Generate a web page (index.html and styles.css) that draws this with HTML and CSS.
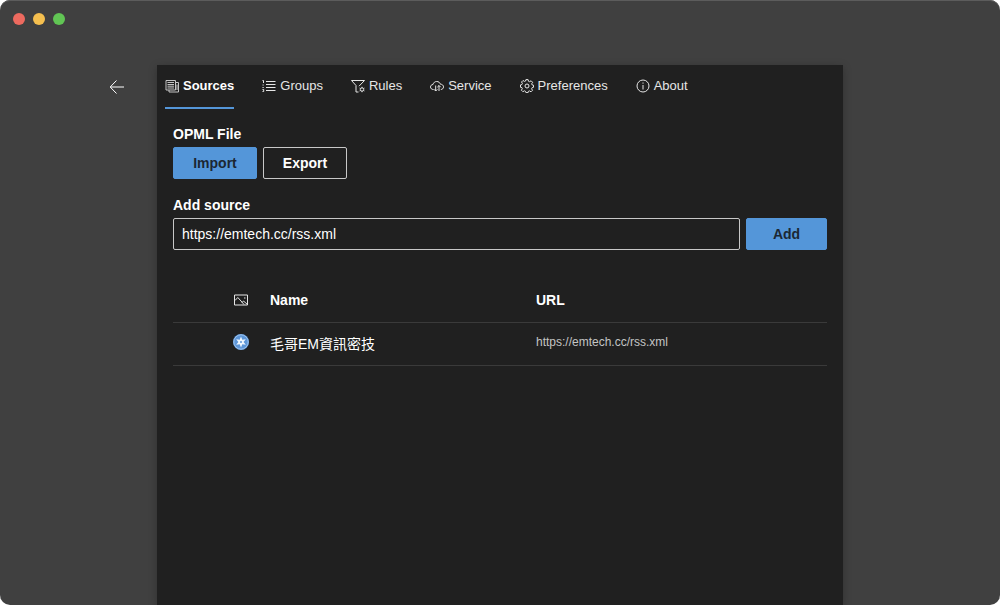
FILE: index.html
```
<!doctype html>
<html lang="en">
<head>
  <meta charset="UTF-8" />
  <meta name="viewport" content="width=device-width, initial-scale=1.0" />
  <title>Settings</title>
  <link rel="stylesheet" href="styles.css">
</head>
<body>
  <div class="window">
    <header class="titlebar">
      <span class="dot red"></span>
      <span class="dot yellow"></span>
      <span class="dot green"></span>
    </header>

    <div class="settings">
      <div class="side">
        <button class="back" type="button" aria-label="Back">
          <svg width="16" height="16" viewBox="0 0 16 16"><path d="M15 8H1.500M7.500 1.500 1.200 8l6.300 6.500" /></svg>
        </button>
      </div>

      <main class="panel">
        <nav class="tabs">
          <button class="tab active" type="button">
            <svg viewBox="0 0 14 14"><path d="M1 1.500h9.500v9.500H1zM10.500 3.500h3v9.500h-9.500v-2M2.500 3.500h6.500M2.500 5.500h6.500M2.500 7.200h6.500M2.500 9h6.500M12 5.500v5.500" /></svg>
            <span>Sources</span>
          </button>
          <button class="tab" type="button">
            <svg viewBox="0 0 14 14"><path d="M4 2.500h9.500M4 5.500h9.500M4 8.500h9.500M4 11.500h9.500M.5 1.500h1v2.500M.5 6h1.200M.5 8.500h1.200M.5 10.500h1.200v2H.5" /></svg>
            <span>Groups</span>
          </button>
          <button class="tab" type="button">
            <svg viewBox="0 0 14 14"><path d="M8 7.200 13.500 1.500H.5l4.500 5v6.500h2.500" /><circle cx="11" cy="10.500" r="1.700" /><path d="M11 7.800v1M11 12.200v1M8.600 9.100l.9.500M12.500 11.400l.9.500M8.600 11.900l.9-.5M12.500 9.600l.9-.5" /></svg>
            <span>Rules</span>
          </button>
          <button class="tab" type="button">
            <svg viewBox="0 0 14 14"><path d="M3.500 10.500C1.500 10.500.5 9.300.5 8s1-2.500 2.500-2.500C3.400 3.500 5 2.500 6.700 2.500c1.900 0 3.200 1.100 3.700 2.700 1.900 0 3.100 1.200 3.100 2.700s-1.100 2.600-2.700 2.600M5.700 6.500V12M4 10.300 5.700 12l1.700-1.700M9 12V6.500M7.300 8.200 9 6.500l1.700 1.700" /></svg>
            <span>Service</span>
          </button>
          <button class="tab" type="button">
            <svg viewBox="0 0 14 14"><path d="M5.900.600h2.200l.4 1.700 1.100.4 1.500-.9 1.500 1.500-.9 1.500.4 1.100 1.400.3v2.100l-1.400.4-.5 1.100.9 1.500-1.500 1.500-1.500-.9-1.100.4-.3 1.300H5.900l-.4-1.300-1.100-.5-1.500.9-1.500-1.500.9-1.500-.4-1.100-1.400-.3V5.900l1.400-.4.500-1.100-.9-1.400 1.500-1.500 1.500.9 1.100-.4z" /><circle cx="7" cy="7" r="2" /></svg>
            <span>Preferences</span>
          </button>
          <button class="tab" type="button">
            <svg viewBox="0 0 14 14"><circle cx="7" cy="7" r="6" /><path d="M7 6v4.500M7 3.500v1.200" /></svg>
            <span>About</span>
          </button>
        </nav>

        <div class="content">
          <section class="field">
            <h2 class="label">OPML File</h2>
            <div class="row">
              <button class="btn primary" type="button">Import</button>
              <button class="btn" type="button">Export</button>
            </div>
          </section>

          <form class="field">
            <label class="label" for="sourceUrl">Add source</label>
            <div class="row">
              <input class="input" id="sourceUrl" type="text" value="https://emtech.cc/rss.xml" />
              <button class="btn primary" type="button">Add</button>
            </div>
          </form>

          <table class="sources">
            <thead>
              <tr>
                <th class="col-icon" aria-label="Icon">
                  <svg class="pic" width="16" height="14" viewBox="0 0 16 14"><path d="M1.500 2h13v10h-13zM2 7.500l2.800-3L8 8M9 9.500l1.500-1.500 4 3.500M8 8l3 3.500M11 5h1.500" /></svg>
                </th>
                <th class="col-name">Name</th>
                <th class="col-url">URL</th>
              </tr>
            </thead>
            <tbody>
              <tr>
                <td class="col-icon">
                  <svg class="favicon" width="16" height="16" viewBox="0 0 16 16">
                    <circle cx="8" cy="8" r="8" fill="#5d96d8" />
                    <circle cx="8" cy="8" r="7.200" fill="none" stroke="#9cc3ee" />
                    <path d="M8 2.500 9.300 5.700 12.800 5.200 10.600 8l2.200 2.800-3.500-.5L8 13.500l-1.300-3.200-3.500.5L5.400 8 3.200 5.200l3.500.5z" fill="#eff7ff" />
                    <circle cx="8" cy="8" r="1" fill="#5d96d8" />
                  </svg>
                </td>
                <td class="col-name" lang="zh-TW">毛哥EM資訊密技</td>
                <td class="col-url">https://emtech.cc/rss.xml</td>
              </tr>
            </tbody>
          </table>
        </div>
      </main>
    </div>
  </div>
</body>
</html>
```
FILE: styles.css
```
:root {
  --bg: #404040;
  --panel: #202020;
  --text: #fff;
  --text-soft: #e6e6e6;
  --text-dim: #c4c4c4;
  --brand: #5496d9;
  --line: #3a3a3a;
}
* { box-sizing: border-box; }
body {
  margin: 0;
  background: #fff;
  color: var(--text);
  font-family: "Liberation Sans", "Noto Sans CJK TC", sans-serif;
  font-size: 14px;
  line-height: 20px;
}
button, input { font: inherit; color: inherit; }
svg { display: block; fill: none; stroke: currentColor; }
.window {
  min-height: 100vh;
  display: flex;
  flex-direction: column;
  background: var(--bg);
  border-radius: 10px;
  overflow: hidden;
  box-shadow: inset 0 1px 0 #5c5c5c;
}
.titlebar { display: flex; gap: 8px; padding: 13px; height: 65px; }
.dot { width: 12px; height: 12px; border-radius: 50%; }
.red { background: #ed6a5f; }
.yellow { background: #f5bf4f; }
.green { background: #61c554; }
.settings {
  flex: 1;
  display: grid;
  grid-template-columns: 1fr minmax(0, 686px) 1fr;
}
.side { display: flex; justify-content: flex-end; align-items: flex-start; padding: 6px 24px; }
.back {
  display: grid;
  place-items: center;
  width: 32px;
  height: 32px;
  padding: 0;
  border: 0;
  background: none;
  cursor: pointer;
}
.panel { background: var(--panel); box-shadow: 0 2px 8px rgba(0,0,0,.25); }
.tabs { display: flex; gap: 28px; height: 44px; padding: 0 8px; }
.tab {
  display: flex;
  align-items: center;
  gap: 4px;
  padding: 0;
  border: 0;
  border-bottom: 2px solid transparent;
  background: none;
  color: var(--text-soft);
  font-size: 13px;
  cursor: pointer;
}
.tab svg { width: 14px; height: 14px; }
.tab.active { color: var(--text); font-weight: 700; border-bottom-color: var(--brand); }
.tab.active svg { color: var(--text-dim); }
.content { padding: 15px 16px; }
.field { margin-bottom: 16px; }
.label { display: block; margin: 0 0 3px; font-size: 14px; font-weight: 700; }
.row { display: flex; gap: 6px; }
.btn {
  min-width: 84px;
  height: 32px;
  padding: 0 16px;
  border: 1px solid #c8c8c8;
  border-radius: 2px;
  background: none;
  font-weight: 700;
  cursor: pointer;
}
.btn.primary { background: var(--brand); border-color: var(--brand); color: #1b2733; }
.field .input + .btn { min-width: 81px; }
.input {
  flex: 1;
  min-width: 0;
  height: 32px;
  padding: 0 8px;
  border: 1px solid #c8c8c8;
  border-radius: 2px;
  background: none;
}
.sources { width: 100%; margin-top: 29px; border-collapse: collapse; table-layout: fixed; }
.sources th, .sources td {
  height: 43px;
  padding: 0;
  border-bottom: 1px solid var(--line);
  text-align: left;
}
.sources .col-icon { width: 97px; padding-left: 60px; }
.sources .col-name { width: 266px; }
.sources td.col-icon, .sources td.col-url { padding-bottom: 4px; }
.sources td.col-url { font-size: 12px; color: var(--text-dim); }
.pic { color: var(--text-soft); }
.favicon { stroke: none; }
```
